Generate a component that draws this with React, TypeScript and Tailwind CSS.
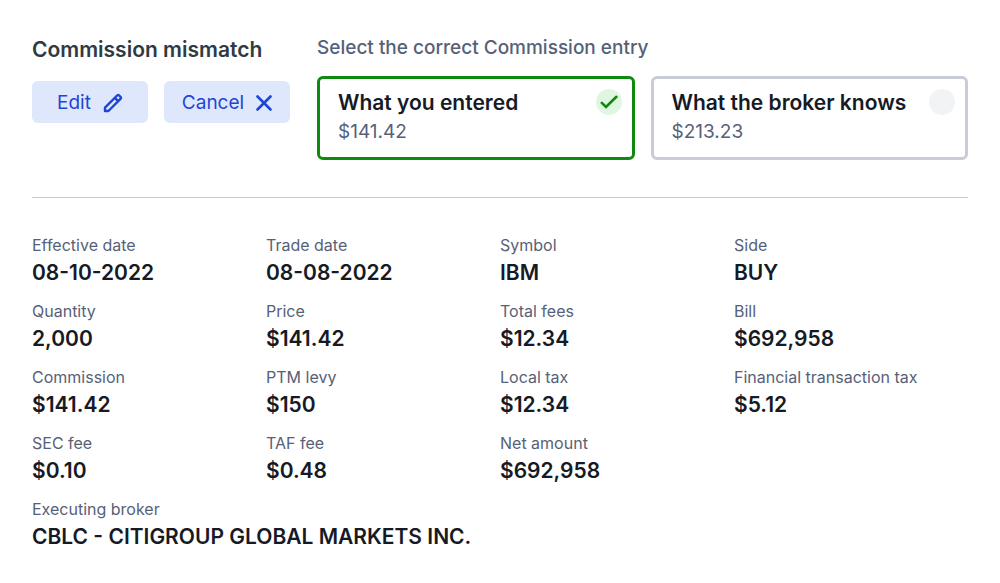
import { useState } from "react";

const entries = [
  { id: "entered", title: "What you entered", amount: "$141.42" },
  { id: "broker", title: "What the broker knows", amount: "$213.23" },
];

const details = [
  { label: "Effective date", value: "08-10-2022" },
  { label: "Trade date", value: "08-08-2022" },
  { label: "Symbol", value: "IBM" },
  { label: "Side", value: "BUY" },
  { label: "Quantity", value: "2,000" },
  { label: "Price", value: "$141.42" },
  { label: "Total fees", value: "$12.34" },
  { label: "Bill", value: "$692,958" },
  { label: "Commission", value: "$141.42" },
  { label: "PTM levy", value: "$150" },
  { label: "Local tax", value: "$12.34" },
  { label: "Financial transaction tax", value: "$5.12" },
  { label: "SEC fee", value: "$0.10" },
  { label: "TAF fee", value: "$0.48" },
  { label: "Net amount", value: "$692,958" },
  { label: "Executing broker", value: "CBLC - CITIGROUP GLOBAL MARKETS INC.", wide: true },
];

function PencilIcon() {
  return (
    <svg className="size-5" viewBox="0 0 20 20" fill="none" stroke="currentColor" strokeWidth="2.4" strokeLinejoin="round" aria-hidden="true">
      <path d="M2 18v-3.4L14.1 2.5a1.5 1.5 0 0 1 2.1 0l1.3 1.3a1.5 1.5 0 0 1 0 2.1L5.4 18z" />
      <path d="M11.8 4.8l3.4 3.4" />
    </svg>
  );
}

function CloseIcon() {
  return (
    <svg className="size-4" viewBox="0 0 16 16" fill="none" stroke="currentColor" strokeWidth="2.6" strokeLinecap="round" aria-hidden="true">
      <path d="M1.5 1.5l13 13M14.5 1.5l-13 13" />
    </svg>
  );
}

function EntryCard({ entry, selected, onSelect }) {
  return (
    <label
      className={`flex min-w-0 flex-1 cursor-pointer justify-between rounded-md border-3 pt-2 pr-2.5 pb-3 pl-[18px] ${
        selected ? "border-[#0f8a0f]" : "border-[#c8ccd6]"
      }`}
    >
      <span>
        <span className="block text-[21px] leading-8 font-semibold text-[#161a25]">{entry.title}</span>
        <span className="block text-[19px] leading-[26px] text-[#566178]">{entry.amount}</span>
      </span>
      <span className="mt-0.5 grid size-[26px] shrink-0 place-items-center">
        <input
          type="radio"
          name="commission"
          value={entry.id}
          checked={selected}
          onChange={() => onSelect(entry.id)}
          className="col-start-1 row-start-1 size-[26px] appearance-none rounded-full bg-[#f2f3f5] checked:bg-[#dff7e0]"
        />
        {selected && (
          <svg
            className="pointer-events-none col-start-1 row-start-1 size-[18px] text-[#0f8a0f]"
            viewBox="0 0 18 18"
            fill="none"
            stroke="currentColor"
            strokeWidth="2.6"
            strokeLinecap="round"
            aria-hidden="true"
          >
            <path d="M1.8 9.8l4.2 4.2L16.4 3.8" />
          </svg>
        )}
      </span>
    </label>
  );
}

export default function App() {
  const [selected, setSelected] = useState("entered");

  return (
    <main className="bg-white px-8 pt-8 pb-7 font-['Inter',sans-serif]">
      <div className="flex gap-[27px] border-b border-[#c8ccd6] pb-[37px]">
        <section className="shrink-0">
          <h1 className="pt-0.5 text-[21px] leading-8 font-semibold text-[#2f3a44]">Commission mismatch</h1>
          <div className="mt-[15px] flex gap-4">
            <button
              type="button"
              className="flex h-[42px] w-[116px] items-center justify-center gap-3 rounded-md bg-[#dee7fb] pt-0.5 text-[19px] text-[#1d46d2]"
            >
              Edit
              <PencilIcon />
            </button>
            <button
              type="button"
              className="flex h-[42px] w-[126px] items-center justify-center gap-3 rounded-md bg-[#dee7fb] pt-0.5 text-[19px] text-[#1d46d2]"
            >
              Cancel
              <CloseIcon />
            </button>
          </div>
        </section>

        <fieldset className="min-w-0 flex-1">
          <legend className="pt-0.5 text-[19px] leading-7 font-medium text-[#566178]">
            Select the correct Commission entry
          </legend>
          <div className="mt-3.5 flex gap-4">
            {entries.map((entry) => (
              <EntryCard key={entry.id} entry={entry} selected={selected === entry.id} onSelect={setSelected} />
            ))}
          </div>
        </fieldset>
      </div>

      <dl className="mt-[35px] grid grid-cols-4 gap-y-2.5">
        {details.map((item) => (
          <div key={item.label} className={item.wide ? "col-span-4" : ""}>
            <dt className="text-base leading-6 text-[#566178]">{item.label}</dt>
            <dd className="text-[21px] leading-8 font-semibold text-[#161a25]">{item.value}</dd>
          </div>
        ))}
      </dl>
    </main>
  );
}
